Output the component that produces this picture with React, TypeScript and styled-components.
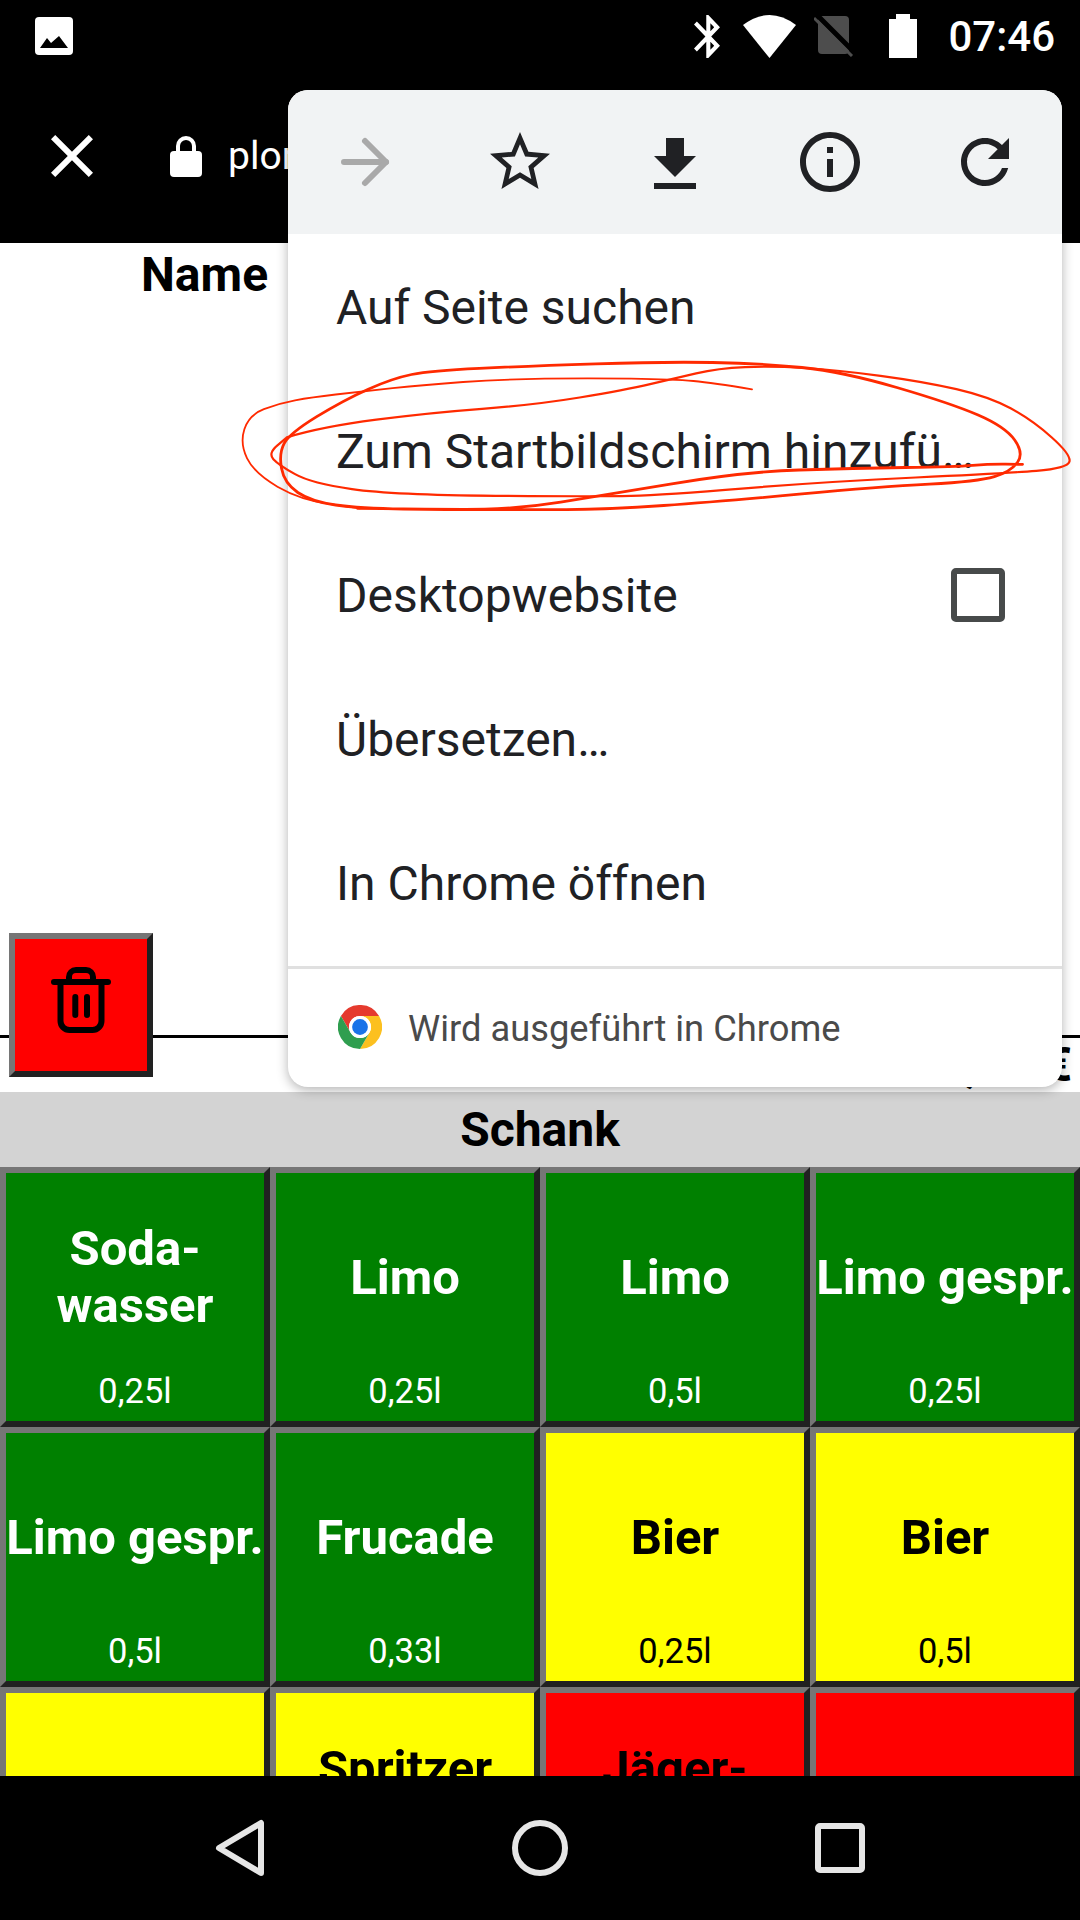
import * as React from 'react'
import styled, { createGlobalStyle } from 'styled-components'

type Tone = 'green' | 'yellow' | 'red'

const toneBg: Record<Tone, string> = { green: '#008000', yellow: '#ffff00', red: '#ff0000' }

const GlobalStyle = createGlobalStyle`
  html, body { margin: 0; padding: 0; background: #000; }
  * { box-sizing: border-box; }
`

const Page = styled.div`
  position: relative;
  width: 1080px;
  height: 1920px;
  overflow: hidden;
  display: flex;
  flex-direction: column;
  background: #fff;
  font-family: Roboto, "Liberation Sans", sans-serif;
  color: #000;
`

const StatusBar = styled.div`
  flex: 0 0 72px;
  display: flex;
  align-items: center;
  padding: 0 25px 0 35px;
  background: #000;
  color: #fff;
`

const StatusRight = styled.div`
  margin-left: auto;
  display: flex;
  align-items: center;
`

const StatusIcon = styled.svg<{ $gap: number }>`
  display: block;
  margin-right: ${(p) => p.$gap}px;
`

const Time = styled.span`
  font-size: 42px;
  font-weight: 500;
  line-height: 1;
  margin-top: 2px;
`

const Toolbar = styled.div`
  flex: 0 0 171px;
  display: flex;
  align-items: center;
  padding: 0 0 3px 36px;
  background: #000;
  color: #fff;
`

const LockIcon = styled.svg`
  margin-left: 62px;
  margin-right: 26px;
`

const Url = styled.span`
  font-size: 39px;
  line-height: 1;
`

const Content = styled.div`
  flex: 0 0 849px;
  display: flex;
  flex-direction: column;
  position: relative;
`

const NameHead = styled.div`
  padding: 5px 0 0 141px;
  font-size: 48px;
  font-weight: 700;
  line-height: 53px;
`

const TotalArea = styled.div`
  margin-top: auto;
  position: relative;
`

const RuleRow = styled.div`
  height: 105px;
  border-bottom: 3px solid #000;
`

const Total = styled.div`
  height: 54px;
  padding: 0 8px 0 0;
  text-align: right;
  font-size: 48px;
  font-weight: 700;
  line-height: 53px;
`

const TrashButton = styled.div`
  position: absolute;
  left: 9px;
  bottom: 15px;
  width: 144px;
  height: 144px;
  display: flex;
  align-items: center;
  justify-content: center;
  padding-bottom: 10px;
  background: #ff0000;
  border: 6px solid;
  border-color: #767676 #212121 #212121 #767676;
`

const Band = styled.div`
  flex: 0 0 75px;
  display: flex;
  align-items: center;
  justify-content: center;
  background: #d3d3d3;
  font-size: 48px;
  font-weight: 700;
`

const Grid = styled.div`
  flex: 0 0 609px;
  display: grid;
  grid-template-columns: repeat(4, 270px);
  grid-auto-rows: 260px;
  overflow: hidden;
`

const Cell = styled.div<{ $tone: Tone }>`
  display: flex;
  flex-direction: column;
  align-items: center;
  background: ${(p) => toneBg[p.$tone]};
  color: ${(p) => (p.$tone === 'green' ? '#fff' : '#000')};
  border: 6px solid;
  border-color: #767676 #212121 #212121 #767676;
`

const Title = styled.div`
  flex: 0 0 208px;
  display: flex;
  align-items: center;
  justify-content: center;
  text-align: center;
  white-space: pre-line;
  font-size: 49px;
  font-weight: 700;
  line-height: 57px;
`

const Size = styled.div`
  font-size: 34.5px;
  line-height: 20px;
`

const NavBar = styled.div`
  flex: 0 0 144px;
  display: flex;
  align-items: center;
  justify-content: center;
  gap: 240px;
  background: #000;
`

const Menu = styled.div`
  position: absolute;
  left: 288px;
  top: 90px;
  width: 774px;
  height: 997px;
  display: flex;
  flex-direction: column;
  overflow: hidden;
  background: #fff;
  border-radius: 20px;
  box-shadow: 0 3px 12px rgba(0, 0, 0, 0.3);
`

const MenuIcons = styled.div`
  flex: 0 0 144px;
  display: flex;
  background: #f1f3f4;
`

const MenuIconCell = styled.div`
  flex: 1;
  display: flex;
  align-items: center;
  justify-content: center;
`

const MenuList = styled.div`
  flex: 0 0 732px;
  padding-top: 1px;
`

const MenuItem = styled.div`
  height: 144px;
  display: flex;
  align-items: center;
  justify-content: space-between;
  padding: 0 57px 0 48px;
  font-size: 48px;
  color: #202124;
`

const Checkbox = styled.div`
  width: 54px;
  height: 54px;
  border: 6px solid #474a4a;
  border-radius: 5px;
`

const MenuFooter = styled.div`
  flex: 1;
  display: flex;
  align-items: center;
  gap: 26px;
  padding: 0 0 3px 50px;
  border-top: 3px solid #e0e0e0;
  font-size: 36.3px;
  color: #4a4a4a;
`

const FooterText = styled.span`
  margin-top: 3px;
`

const Scribble = styled.svg`
  position: absolute;
  left: 230px;
  top: 340px;
  pointer-events: none;
`

type Item = { name: string; size?: string; tone: Tone }

const items: Item[] = [
  { name: 'Soda-\nwasser', size: '0,25l', tone: 'green' },
  { name: 'Limo', size: '0,25l', tone: 'green' },
  { name: 'Limo', size: '0,5l', tone: 'green' },
  { name: 'Limo gespr.', size: '0,25l', tone: 'green' },
  { name: 'Limo gespr.', size: '0,5l', tone: 'green' },
  { name: 'Frucade', size: '0,33l', tone: 'green' },
  { name: 'Bier', size: '0,25l', tone: 'yellow' },
  { name: 'Bier', size: '0,5l', tone: 'yellow' },
  { name: '', tone: 'yellow' },
  { name: 'Spritzer\n\u00a0', tone: 'yellow' },
  { name: 'Jäger-\n\u00a0', tone: 'red' },
  { name: '', tone: 'red' },
]

const menuEntries = ['Auf Seite suchen', 'Zum Startbildschirm hinzufü…', 'Desktopwebsite', 'Übersetzen…', 'In Chrome öffnen']

// traced from the hand drawn circle, in a 1568x600 space squeezed onto 850x200
const strokes: { w: number; pts: number[][] }[] = [
  {
    w: 1.8,
    pts: [[963, 148], [890, 128], [820, 118], [660, 114], [500, 118], [360, 134], [240, 155], [150, 172], [90, 190], [35, 225], [18, 310], [45, 400], [130, 480], [240, 505]],
  },
  {
    w: 2.8,
    pts: [[235, 505], [540, 510], [700, 508], [900, 485], [1200, 440], [1380, 425], [1440, 395], [1465, 340], [1430, 260], [1330, 190], [1130, 95], [980, 70], [800, 65], [550, 78], [370, 92], [300, 115], [210, 180], [110, 280], [90, 340], [100, 430], [150, 485], [240, 505], [400, 510], [540, 505], [680, 468], [950, 395], [1150, 385], [1340, 380], [1400, 372], [1462, 373]],
  },
  {
    w: 2.2,
    pts: [[105, 292], [170, 260], [370, 218], [560, 195], [730, 150], [820, 115], [900, 85], [1000, 78], [1120, 90], [1280, 125], [1400, 170], [1480, 240], [1552, 345], [1545, 385], [1430, 400], [1100, 425], [800, 465], [680, 470], [300, 465], [150, 430], [90, 375], [70, 340], [105, 292]],
  },
]

const smoothPath = (pts: number[][]) => {
  let d = `M${pts[0][0]} ${pts[0][1]}`
  for (let i = 1; i < pts.length - 1; i++) {
    const mx = (pts[i][0] + pts[i + 1][0]) / 2
    const my = (pts[i][1] + pts[i + 1][1]) / 2
    d += ` Q${pts[i][0]} ${pts[i][1]} ${mx} ${my}`
  }
  const last = pts[pts.length - 1]
  return `${d} L${last[0]} ${last[1]}`
}

const ChromeLogo = () => (
  <svg width="44" height="44" viewBox="0 0 48 48">
    <path fill="#e53a2e" d="M3.2 12A24 24 0 0 1 44.8 12H24A12 12 0 0 0 13.6 30Z" />
    <path fill="#fcc01f" d="M44.8 12A24 24 0 0 1 24 48L34.4 30A12 12 0 0 0 24 12Z" />
    <path fill="#2f9e4f" d="M24 48A24 24 0 0 1 3.2 12L13.6 30A12 12 0 0 0 34.4 30Z" />
    <circle cx="24" cy="24" r="12" fill="#fff" />
    <circle cx="24" cy="24" r="8.6" fill="#1a73e8" />
  </svg>
)

export default function App() {
  return (
    <Page>
      <GlobalStyle />
      <StatusBar>
        <svg width="38" height="38" viewBox="0 0 38 38">
          <rect width="38" height="38" rx="4" fill="#fff" />
          <path fill="#000" d="M5 31L12 21L16 26L24 19L33 31Z" />
        </svg>
        <StatusRight>
          <StatusIcon $gap={23} width="26" height="43" viewBox="5 2 12.71 20" preserveAspectRatio="none">
            <path fill="#fff" d="M17.71 7.71L12 2h-1v7.59L6.41 5 5 6.41 10.59 12 5 17.59 6.41 19 11 14.41V22h1l5.71-5.71-4.3-4.29 4.3-4.29zM13 5.83l1.88 1.88L13 9.59V5.83zm1.88 10.46L13 18.17v-3.76l1.88 1.88z" />
          </StatusIcon>
          <StatusIcon $gap={18} width="53" height="43" viewBox="0 0 53 43">
            <path fill="#fff" d="M26.5 43L0 10Q26.5 -10 53 10Z" />
          </StatusIcon>
          <StatusIcon $gap={35} width="40" height="42" viewBox="0 0 40 42">
            <path fill="#4d4d4d" d="M4 5a4 4 0 0 1 4-4H31a4 4 0 0 1 4 4V35a4 4 0 0 1-4 4H8a4 4 0 0 1-4-4Z" />
            <path stroke="#000" strokeWidth="5" d="M3 0L39 36" />
            <path stroke="#4d4d4d" strokeWidth="3" d="M0 3L38 41" />
          </StatusIcon>
          <StatusIcon $gap={31} width="28" height="44" viewBox="0 0 28 44">
            <path fill="#fff" d="M7 0H21V5H28V44H0V5H7Z" />
          </StatusIcon>
          <Time>07:46</Time>
        </StatusRight>
      </StatusBar>

      <Toolbar>
        <svg width="72" height="72" viewBox="0 0 24 24">
          <path fill="#fff" d="M19 6.41L17.59 5 12 10.59 6.41 5 5 6.41 10.59 12 5 17.59 6.41 19 12 13.41 17.59 19 19 17.59 13.41 12z" />
        </svg>
        <LockIcon width="32" height="41" viewBox="0 0 32 41">
          <path fill="none" stroke="#fff" strokeWidth="4" d="M8 18V10a8 8 0 0 1 16 0V18" />
          <rect y="15" width="32" height="26" rx="4" fill="#fff" />
        </LockIcon>
        <Url>plon</Url>
      </Toolbar>

      <Content>
        <NameHead>Name</NameHead>
        <TotalArea>
          <RuleRow />
          <Total>0,00 €</Total>
          <TrashButton>
            <svg width="60" height="66" viewBox="0 0 60 66" fill="none" stroke="#000" strokeWidth="6" strokeLinecap="round">
              <path d="M3 15H57" />
              <path d="M9.5 15V54a9 9 0 0 0 9 9H41.5a9 9 0 0 0 9-9V15" />
              <path d="M18 15V10a7 7 0 0 1 7-7H35a7 7 0 0 1 7 7V15" />
              <path d="M24.3 30V48M36 30V48" />
            </svg>
          </TrashButton>
        </TotalArea>
      </Content>

      <Band>Schank</Band>

      <Grid>
        {items.map((item, i) => (
          <Cell key={i} $tone={item.tone}>
            <Title>{item.name}</Title>
            {item.size && <Size>{item.size}</Size>}
          </Cell>
        ))}
      </Grid>

      <NavBar>
        <svg width="60" height="60" viewBox="0 0 60 60" fill="none" stroke="#e6e6e6" strokeWidth="6" strokeLinejoin="round">
          <path d="M51 5V55L9 30Z" />
        </svg>
        <svg width="60" height="60" viewBox="0 0 60 60" fill="none" stroke="#e6e6e6" strokeWidth="6">
          <circle cx="30" cy="30" r="25" />
        </svg>
        <svg width="60" height="60" viewBox="0 0 60 60" fill="none" stroke="#e6e6e6" strokeWidth="6">
          <rect x="8" y="8" width="44" height="44" rx="2" />
        </svg>
      </NavBar>

      <Menu>
        <MenuIcons>
          <MenuIconCell>
            <svg width="72" height="72" viewBox="0 0 24 24" fill="none" stroke="#a9a9a9" strokeWidth="2" strokeLinecap="round" strokeLinejoin="round">
              <path d="M5 12h14" />
              <path d="M12 5l7 7-7 7" />
            </svg>
          </MenuIconCell>
          <MenuIconCell>
            <svg width="72" height="72" viewBox="0 0 24 24">
              <path fill="#202124" d="M22 9.24l-7.19-.62L12 2 9.19 8.63 2 9.24l5.46 4.73L5.82 21 12 17.27 18.18 21l-1.63-7.03L22 9.24zM12 15.4l-3.76 2.27 1-4.28-3.32-2.88 4.38-.38L12 6.1l1.71 4.04 4.38.38-3.32 2.88 1 4.28L12 15.4z" />
            </svg>
          </MenuIconCell>
          <MenuIconCell>
            <svg width="72" height="72" viewBox="0 -1 24 24">
              <path fill="#202124" d="M19 9h-4V3H9v6H5l7 7 7-7zM5 18v2h14v-2H5z" />
            </svg>
          </MenuIconCell>
          <MenuIconCell>
            <svg width="72" height="72" viewBox="0 0 24 24">
              <path fill="#202124" d="M11 7h2v2h-2zm0 4h2v6h-2zm1-9C6.48 2 2 6.48 2 12s4.48 10 10 10 10-4.48 10-10S17.52 2 12 2zm0 18c-4.41 0-8-3.59-8-8s3.59-8 8-8 8 3.59 8 8-3.59 8-8 8z" />
            </svg>
          </MenuIconCell>
          <MenuIconCell>
            <svg width="72" height="72" viewBox="0 0 24 24">
              <path fill="#202124" d="M17.65 6.35C16.2 4.9 14.21 4 12 4c-4.42 0-7.99 3.58-7.99 8s3.57 8 7.99 8c3.73 0 6.84-2.55 7.73-6h-2.08c-.82 2.33-3.04 4-5.65 4-3.31 0-6-2.69-6-6s2.69-6 6-6c1.66 0 3.14.69 4.22 1.78L13 11h7V4l-2.35 2.35z" />
            </svg>
          </MenuIconCell>
        </MenuIcons>
        <MenuList>
          {menuEntries.map((label) => (
            <MenuItem key={label}>
              {label}
              {label === 'Desktopwebsite' && <Checkbox />}
            </MenuItem>
          ))}
        </MenuList>
        <MenuFooter>
          <ChromeLogo />
          <FooterText>Wird ausgeführt in Chrome</FooterText>
        </MenuFooter>
      </Menu>

      <Scribble width="850" height="200" viewBox="0 0 1568 600" preserveAspectRatio="none" fill="none" stroke="#ff2a00">
        {strokes.map((s, i) => (
          <path key={i} d={smoothPath(s.pts)} strokeWidth={s.w} vectorEffect="non-scaling-stroke" strokeLinecap="round" />
        ))}
      </Scribble>
    </Page>
  )
}
